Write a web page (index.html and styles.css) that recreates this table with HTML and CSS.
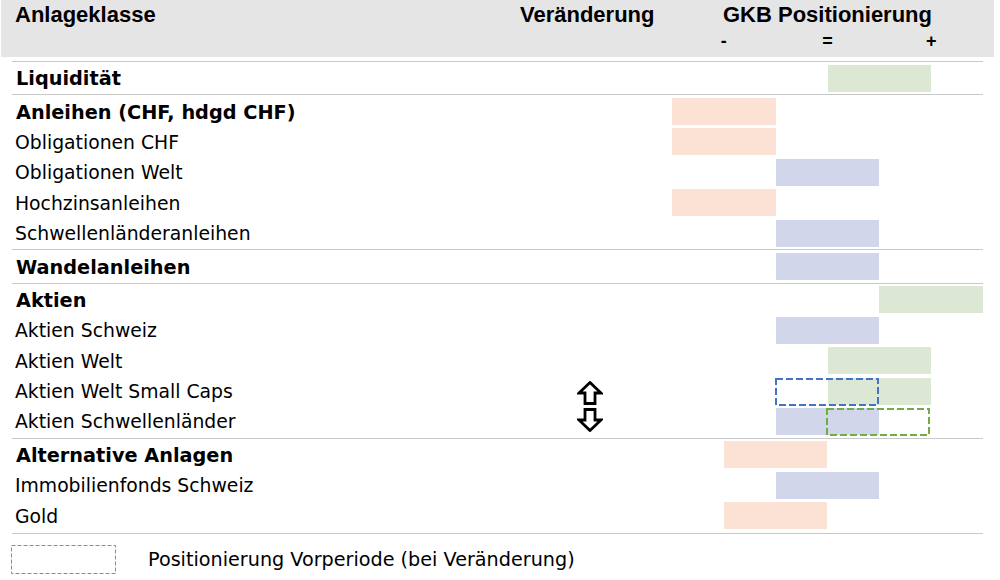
FILE: index.html
```html
<!DOCTYPE html>
<html lang="de">
<head>
<meta charset="utf-8">
<title>GKB Positionierung</title>
<link rel="stylesheet" href="styles.css">
</head>
<body>
<div class="page">
  <div class="head">
    <div class="h-name">Anlageklasse</div>
    <div class="h-change">Veränderung</div>
    <div class="h-pos">
      <div class="h-title">GKB Positionierung</div>
      <div class="scale"><span>-</span><span>=</span><span>+</span></div>
    </div>
  </div>

  <div class="group">
    <div class="row main"><div class="name">Liquidität</div><div class="chg"></div><div class="track"><div class="bar green p05"></div></div></div>
  </div>

  <div class="group">
    <div class="row main"><div class="name">Anleihen (CHF, hdgd CHF)</div><div class="chg"></div><div class="track"><div class="bar orange m1"></div></div></div>
    <div class="row"><div class="name">Obligationen CHF</div><div class="chg"></div><div class="track"><div class="bar orange m1"></div></div></div>
    <div class="row"><div class="name">Obligationen Welt</div><div class="chg"></div><div class="track"><div class="bar blue z0"></div></div></div>
    <div class="row"><div class="name">Hochzinsanleihen</div><div class="chg"></div><div class="track"><div class="bar orange m1"></div></div></div>
    <div class="row"><div class="name">Schwellenländeranleihen</div><div class="chg"></div><div class="track"><div class="bar blue z0"></div></div></div>
  </div>

  <div class="group">
    <div class="row main"><div class="name">Wandelanleihen</div><div class="chg"></div><div class="track"><div class="bar blue z0"></div></div></div>
  </div>

  <div class="group">
    <div class="row main"><div class="name">Aktien</div><div class="chg"></div><div class="track"><div class="bar green p1"></div></div></div>
    <div class="row"><div class="name">Aktien Schweiz</div><div class="chg"></div><div class="track"><div class="bar blue z0"></div></div></div>
    <div class="row"><div class="name">Aktien Welt</div><div class="chg"></div><div class="track"><div class="bar green p05"></div></div></div>
    <div class="row"><div class="name">Aktien Welt Small Caps</div>
      <div class="chg"><svg class="arrow up" width="26" height="24" viewBox="0 0 26 24"><polygon points="13,1.5 24,12 18,12 18,22.5 8,22.5 8,12 2,12" /></svg></div>
      <div class="track"><div class="bar green p05"></div>
        <svg class="prev z0" width="104" height="28" viewBox="0 0 104 28"><rect x="1" y="1" width="102" height="26" class="dash-blue"/></svg>
      </div></div>
    <div class="row"><div class="name">Aktien Schwellenländer</div>
      <div class="chg"><svg class="arrow down" width="26" height="24" viewBox="0 0 26 24"><polygon points="13,22.5 24,12 18,12 18,1.5 8,1.5 8,12 2,12" /></svg></div>
      <div class="track"><div class="bar blue z0"></div>
        <svg class="prev p05" width="104" height="28" viewBox="0 0 104 28"><rect x="1" y="1" width="102" height="26" class="dash-green"/></svg>
      </div></div>
  </div>

  <div class="group last">
    <div class="row main"><div class="name">Alternative Anlagen</div><div class="chg"></div><div class="track"><div class="bar orange m05"></div></div></div>
    <div class="row"><div class="name">Immobilienfonds Schweiz</div><div class="chg"></div><div class="track"><div class="bar blue z0"></div></div></div>
    <div class="row"><div class="name">Gold</div><div class="chg"></div><div class="track"><div class="bar orange m05"></div></div></div>
  </div>

  <div class="legend">
    <svg class="legend-box" width="105" height="29" viewBox="0 0 105 29"><rect x="0.5" y="0.5" width="104" height="28" /></svg>
    <span class="legend-text">Positionierung Vorperiode (bei Veränderung)</span>
  </div>
</div>
</body>
</html>
```

FILE: styles.css
```css
* { box-sizing: border-box; }
html, body { margin: 0; padding: 0; background: #ffffff; }
body { font-family: "DejaVu Sans", Verdana, sans-serif; color: #000; }

.page { width: 1000px; height: 580px; overflow: hidden; }

/* header */
.head {
  display: grid;
  grid-template-columns: 519px 152px 311px;
  width: 993px;
  height: 57px;
  margin-left: 1px;
  background: #e6e5e6;
  font-family: "Liberation Sans", Arial, sans-serif;
  font-weight: bold;
  margin-bottom: 4px;
}
.h-name, .h-change, .h-title { font-size: 22px; line-height: 25px; padding-top: 2px; white-space: nowrap; }
.h-name { padding-left: 14px; }
.h-title { padding-left: 51px; }
.scale {
  display: grid;
  grid-template-columns: repeat(3, 1fr);
  margin-top: 4px;
  font-size: 18px;
  line-height: 20px;
  text-align: center;
}

/* groups */
.group {
  margin-left: 12px;
  width: 971px;
  border-top: 1px solid #c9c9c9;
  padding: 1px 0;
}
.group.last { border-bottom: 1px solid #c9c9c9; padding-bottom: 2px; }

.row {
  display: grid;
  grid-template-columns: 548px 112px 311px;
  height: 30.4px;
  align-items: center;
}
.name { padding-left: 3px; padding-top: 2px; font-size: 18.8px; line-height: 22px; white-space: nowrap; }
.main .name { font-weight: bold; font-size: 19.3px; padding-left: 4px; }

.chg { height: 100%; display: flex; padding-left: 17px; }
.arrow { display: block; }
.arrow polygon { fill: #fff; stroke: #000; stroke-width: 2.8; stroke-linejoin: miter; }
.arrow.up { align-self: flex-end; margin-bottom: 1px; }
.arrow.down { align-self: flex-start; margin-top: 2px; }

.track { position: relative; height: 27px; }
.bar { height: 27px; width: 33.333%; }
.orange { background: #fbe2d5; }
.blue { background: #d1d6eb; }
.green { background: #dde8d4; }

.m1 { margin-left: 0; }
.m05 { margin-left: 16.667%; }
.z0 { margin-left: 33.333%; }
.p05 { margin-left: 50%; }
.p1 { margin-left: 66.667%; }

.prev { position: absolute; top: 0; left: 0; display: block; }
.prev.z0 { left: 103px; margin-left: 0; }
.prev.p05 { left: 154px; margin-left: 0; }
.prev rect { fill: none; stroke-width: 2; stroke-dasharray: 7 3; }
.dash-blue { stroke: #4472c4; }
.dash-green { stroke: #70ad47; }

/* legend */
.legend {
  display: flex;
  align-items: center;
  margin-top: 11px;
  margin-left: 11px;
  height: 29px;
}
.legend-box rect { fill: none; stroke: #8c8c8c; stroke-width: 1; stroke-dasharray: 4 2; }
.legend-box { display: block; }
.legend-text { margin-left: 32px; padding-top: 2px; font-size: 19.2px; line-height: 22px; white-space: nowrap; }
```
